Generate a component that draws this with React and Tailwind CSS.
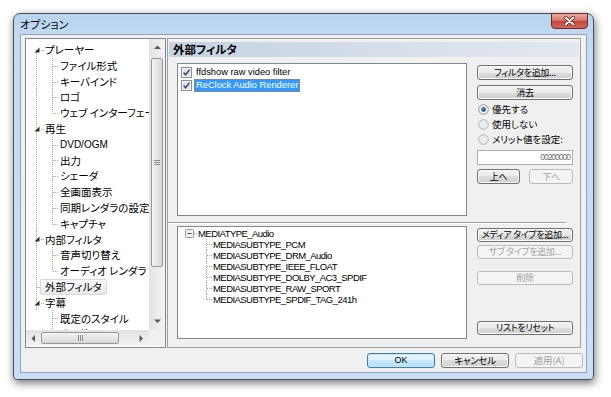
import React from "react";

const JP = "font-['Noto_Sans_CJK_JP',sans-serif] [font-feature-settings:'palt']";
const LAT = "font-['Liberation_Sans','Noto_Sans_CJK_JP',sans-serif]";

const tree = [
  { r: "プレーヤー", kids: ["ファイル形式", "キーバインド", "ロゴ", "ウェブ インターフェース"] },
  { r: "再生", kids: ["DVD/OGM", "出力", "シェーダ", "全画面表示", "同期レンダラの設定", "キャプチャ"] },
  { r: "内部フィルタ", kids: ["音声切り替え", "オーディオ レンダラ"] },
  { r: "外部フィルタ", kids: [], sel: true },
  { r: "字幕", kids: ["既定のスタイル", "その他"], lastRoot: true },
];

const isAscii = (s) => /^[\x00-\x7F]+$/.test(s);

function DL({ x1, y1, x2, y2 }) {
  return <line x1={x1} y1={y1} x2={x2} y2={y2} stroke="#a3a3a3" strokeWidth="1" strokeDasharray="1 1" />;
}

function Label({ text }) {
  return (
    <span className={`${isAscii(text) ? LAT + " text-[10px]" : JP + " text-[10.5px]"} leading-[15.8px] text-black whitespace-nowrap`}>
      {text}
    </span>
  );
}

function RootRow({ label, first }) {
  return (
    <div className="h-[15.8px] flex items-center">
      <svg width="19" height="16" className="shrink-0">
        <DL x1="10.5" y1={first ? 8 : 0} x2="10.5" y2="16" />
        <DL x1="15" y1="8.5" x2="19" y2="8.5" />
        <polygon points="13.5,5.5 13.5,10.5 8.5,10.5" fill="#333" />
      </svg>
      <Label text={label} />
    </div>
  );
}

function SelRow({ label }) {
  return (
    <div className="h-[15.8px] flex items-center">
      <svg width="14" height="16" className="shrink-0">
        <DL x1="10.5" y1="0" x2="10.5" y2="16" />
        <DL x1="11" y1="8.5" x2="14" y2="8.5" />
      </svg>
      <div className="h-[16px] flex items-center px-[4px] border border-[#d9d9d9] rounded-[2px] bg-[linear-gradient(#fbfbfb,#e9e9e9)]">
        <Label text={label} />
      </div>
    </div>
  );
}

function ChildRow({ label, last, rootLine }) {
  return (
    <div className="h-[15.8px] flex items-center">
      <svg width="34" height="16" className="shrink-0">
        {rootLine && <DL x1="10.5" y1="0" x2="10.5" y2="16" />}
        <DL x1="26.5" y1="0" x2="26.5" y2={last ? 8.5 : 16} />
        <DL x1="27" y1="8.5" x2="33" y2="8.5" />
      </svg>
      <Label text={label} />
    </div>
  );
}

function Btn({ children, disabled, def, className = "" }) {
  const base = "flex items-center justify-center rounded-[3px] border whitespace-nowrap";
  const style = disabled
    ? "border-[#b9bcbf] bg-[#f4f4f4] text-[#a3a3a3]"
    : def
    ? "border-[#3c7fb1] bg-[linear-gradient(#eaf6fd,#dcf1fc_50%,#c6e8fc_50%,#b6dff7)] shadow-[inset_0_0_0_1px_#c4e5f6] text-black"
    : "border-[#707070] bg-[linear-gradient(#f2f2f2,#ebebeb_50%,#dddddd_50%,#cfcfcf)] shadow-[inset_0_0_0_1px_#fafafa] text-black";
  return <div className={`${base} ${style} ${className}`}>{children}</div>;
}

function Check() {
  return (
    <svg width="11" height="11" className="shrink-0">
      <rect x="0.5" y="0.5" width="10" height="10" fill="#f6f6f6" stroke="#8e8f8f" />
      <rect x="2" y="2" width="7" height="7" fill="#dfe4ea" />
      <path d="M2.6 5.4 L4.6 7.8 L8.6 2.6" fill="none" stroke="#2e4a86" strokeWidth="1.5" />
    </svg>
  );
}

function Radio({ on }) {
  return (
    <svg width="11" height="11" className="shrink-0">
      <circle cx="5.5" cy="5.5" r="4.8" fill={on ? "#f4f4f4" : "#ececec"} stroke={on ? "#8e8f8f" : "#b2b2b2"} />
      {on && <circle cx="5.5" cy="5.5" r="2.4" fill="#275e90" />}
      {on && <circle cx="4.9" cy="4.9" r="0.8" fill="#8fc0e8" />}
    </svg>
  );
}

function Tri({ dir }) {
  const pts = {
    up: "0,4 3.5,0.5 7,4",
    down: "0,0.5 3.5,4 7,0.5",
    left: "4,0 0.5,3.5 4,7",
    right: "0.5,0 4,3.5 0.5,7",
  }[dir];
  const w = dir === "up" || dir === "down" ? 7 : 5;
  const h = dir === "up" || dir === "down" ? 5 : 7;
  return (
    <svg width={w} height={h}>
      <polygon points={pts} fill="#5a5a5a" />
    </svg>
  );
}

function TreePanel() {
  const rows = [];
  tree.forEach((n, i) => {
    if (n.sel) rows.push(<SelRow key={n.r} label={n.r} />);
    else rows.push(<RootRow key={n.r} label={n.r} first={i === 0} />);
    n.kids.forEach((k, j) =>
      rows.push(<ChildRow key={k} label={k} last={j === n.kids.length - 1} rootLine={!n.lastRoot} />)
    );
  });
  return (
    <div className="w-[141px] h-[310px] border border-[#828790] bg-white grid grid-cols-[123px_16px] grid-rows-[291px_16px] shrink-0">
      <div className="overflow-hidden pt-[3px]">{rows}</div>
      <div className="bg-[linear-gradient(to_right,#e3e3e3,#f3f3f3)] flex flex-col items-center">
        <div className="h-[17px] flex items-center justify-center"><Tri dir="up" /></div>
        <div className="mt-[2px] w-[12px] h-[209px] rounded-[2px] border border-[#979797] bg-[linear-gradient(to_right,#f4f4f4,#e6e6e6_50%,#d6d6d6)] flex flex-col items-center justify-center gap-[1px]">
          <div className="w-[6px] h-px bg-[#8a8a8a]" />
          <div className="w-[6px] h-px bg-[#8a8a8a]" />
          <div className="w-[6px] h-px bg-[#8a8a8a]" />
        </div>
        <div className="flex-1" />
        <div className="h-[17px] flex items-center justify-center"><Tri dir="down" /></div>
      </div>
      <div className="bg-[linear-gradient(#e3e3e3,#f3f3f3)] flex items-center">
        <div className="w-[15px] flex items-center justify-center"><Tri dir="left" /></div>
        <div className="w-[78px] h-[12px] rounded-[2px] border border-[#979797] bg-[linear-gradient(#f4f4f4,#e6e6e6_50%,#d6d6d6)] flex items-center justify-center gap-[1px]">
          <div className="w-px h-[6px] bg-[#8a8a8a]" />
          <div className="w-px h-[6px] bg-[#8a8a8a]" />
          <div className="w-px h-[6px] bg-[#8a8a8a]" />
        </div>
        <div className="flex-1" />
        <div className="w-[15px] flex items-center justify-center"><Tri dir="right" /></div>
      </div>
      <div className="bg-[#f0f0f0]" />
    </div>
  );
}

const subtypes = [
  "MEDIASUBTYPE_PCM",
  "MEDIASUBTYPE_DRM_Audio",
  "MEDIASUBTYPE_IEEE_FLOAT",
  "MEDIASUBTYPE_DOLBY_AC3_SPDIF",
  "MEDIASUBTYPE_RAW_SPORT",
  "MEDIASUBTYPE_SPDIF_TAG_241h",
];

const small = `${LAT} text-[9.5px] tracking-[-0.55px] text-black whitespace-nowrap leading-[11px]`;

function RightPanel() {
  const btnText = `${JP} text-[9px] tracking-[-0.3px]`;
  const lblText = `${JP} text-[9.5px] text-black`;
  return (
    <div className="w-[414px] h-[310px] border border-[#a0a0a0] bg-[#f0f0f0] flex flex-col">
      <div className="mt-[3px] mx-[1px] h-[15px] bg-[linear-gradient(to_right,#c5d2e2,#d8e0ea_60%,#e2e8ef)] flex items-center pl-[4px]">
        <span className={`${JP} text-[11.5px] font-bold text-black leading-none`}>外部フィルタ</span>
      </div>
      <div className="mt-[6px] pl-[9px] flex">
        <div className="w-[290px] h-[153px] border border-[#828790] bg-white pt-[2px] pl-[3px]">
          <div className="h-[13px] flex items-center">
            <Check />
            <span className={`ml-[4px] ${LAT} text-[9.3px] text-black leading-none`}>ffdshow raw video filter</span>
          </div>
          <div className="h-[13px] flex items-center">
            <Check />
            <span className={`ml-[2px] h-[13px] flex items-center px-[1px] bg-[#3399ff] border border-dotted border-[#c27a3a] ${LAT} text-[9.3px] text-white leading-none`}>
              ReClock Audio Renderer
            </span>
          </div>
        </div>
        <div className="ml-[10px] w-[96px] flex flex-col">
          <Btn className={`mt-[2px] h-[15px] ${btnText}`}>フィルタを追加...</Btn>
          <Btn className={`mt-[5px] h-[15px] ${btnText}`}>消去</Btn>
          <div className="mt-[2px] flex flex-col">
            <div className="h-[15px] flex items-center gap-[3px] pl-[1px]"><Radio on /><span className={lblText}>優先する</span></div>
            <div className="h-[15px] flex items-center gap-[3px] pl-[1px]"><Radio /><span className={lblText}>使用しない</span></div>
            <div className="h-[15px] flex items-center gap-[3px] pl-[1px]"><Radio /><span className={lblText}>メリット値を設定:</span></div>
          </div>
          <div className={`mt-[3px] h-[15px] border border-[#abadb3] bg-white flex items-center justify-end pr-[2px] ${LAT} text-[8.5px] tracking-[-1px] text-[#6d6d6d]`}>
            00200000
          </div>
          <div className="mt-[4px] flex justify-between">
            <Btn className={`w-[43px] h-[15px] ${btnText}`}>上へ</Btn>
            <Btn disabled className={`w-[44px] h-[15px] ${btnText}`}>下へ</Btn>
          </div>
        </div>
      </div>
      <div className="mt-[6px] w-[398px] h-[2px] border-t border-[#a0a0a0] border-b border-b-white" />
      <div className="mt-[2px] pl-[9px] flex">
        <div className="w-[290px] h-[113px] border border-[#828790] bg-white pt-[1px]">
          <div className="h-[11px] flex items-center">
            <svg width="20" height="11" className="shrink-0">
              <rect x="7.5" y="1.5" width="8" height="8" rx="1" fill="#f4f4f4" stroke="#8e9aa8" />
              <line x1="9.5" y1="5.5" x2="13.5" y2="5.5" stroke="#2d4a7a" />
              <DL x1="16" y1="5.5" x2="20" y2="5.5" />
            </svg>
            <span className={small}>MEDIATYPE_Audio</span>
          </div>
          {subtypes.map((s, i) => (
            <div key={s} className="h-[11px] flex items-center">
              <svg width="35" height="11" className="shrink-0">
                <DL x1="28.5" y1="0" x2="28.5" y2={i === subtypes.length - 1 ? 5.5 : 11} />
                <DL x1="29" y1="5.5" x2="34" y2="5.5" />
              </svg>
              <span className={small}>{s}</span>
            </div>
          ))}
        </div>
        <div className="ml-[10px] w-[96px] flex flex-col">
          <Btn className={`mt-[2px] h-[14px] ${btnText}`}>メディア タイプを追加...</Btn>
          <Btn disabled className={`mt-[3px] h-[14px] ${btnText}`}>サブ タイプを追加...</Btn>
          <Btn disabled className={`mt-[12px] h-[14px] ${btnText}`}>削除</Btn>
          <Btn className={`mt-[36px] h-[14px] ${btnText}`}>リストをリセット</Btn>
        </div>
      </div>
    </div>
  );
}

export default function App() {
  return (
    <div className="w-[611px] h-[397px] bg-white pt-[13px] pl-[13px] overflow-hidden">
      <div className="w-[581px] h-[367px] rounded-t-[7px] rounded-b-[4px] border border-[#46525f] bg-[linear-gradient(#bad4ee,#c4dbf3_8%,#cadff5)] shadow-[1px_3px_9px_rgba(0,0,0,0.55)] flex flex-col">
        <div className="h-[20px] flex items-start justify-between shrink-0">
          <span className={`${JP} text-[11px] leading-[20px] pl-[6px] text-black`}>オプション</span>
          <div className="-mt-[1px] mr-[5px] w-[37px] h-[16px] rounded-b-[4px] border border-[#6b2a25] bg-[linear-gradient(#e9a99f,#d77c70_45%,#c4473b_50%,#d2665a)] flex items-center justify-center">
            <svg width="11" height="10">
              <path d="M1.5 1.5 L9.5 8.5 M9.5 1.5 L1.5 8.5" stroke="#4a1713" strokeWidth="3.4" strokeLinecap="round" />
              <path d="M1.5 1.5 L9.5 8.5 M9.5 1.5 L1.5 8.5" stroke="#ffffff" strokeWidth="1.9" strokeLinecap="round" />
            </svg>
          </div>
        </div>
        <div className="mx-[6px] flex-1 border border-[#8ea3bd] bg-[#f0f0f0] flex flex-col pt-[3px] pl-[4px]">
          <div className="flex gap-[1px]">
            <TreePanel />
            <RightPanel />
          </div>
          <div className="mt-[5px] flex justify-end gap-[6px] pr-[3px]">
            <Btn def className={`w-[68px] h-[15px] ${LAT} text-[9px]`}>OK</Btn>
            <Btn className={`w-[68px] h-[15px] ${JP} text-[9.5px] tracking-[-0.3px]`}>キャンセル</Btn>
            <Btn disabled className={`w-[68px] h-[15px] ${JP} text-[9.5px]`}>適用(A)</Btn>
          </div>
        </div>
        <div className="h-[6px] shrink-0" />
      </div>
    </div>
  );
}
